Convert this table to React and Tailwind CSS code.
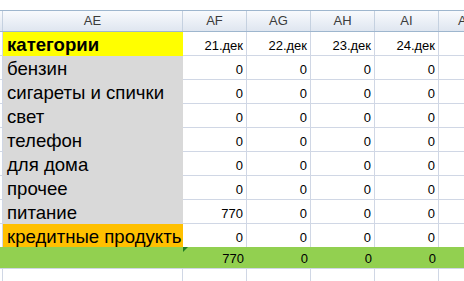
import React from 'react';

const cols = ['AF', 'AG', 'AH', 'AI'];

const rows = [
  { name: 'бензин', vals: ['0', '0', '0', '0'] },
  { name: 'сигареты и спички', vals: ['0', '0', '0', '0'] },
  { name: 'свет', vals: ['0', '0', '0', '0'] },
  { name: 'телефон', vals: ['0', '0', '0', '0'] },
  { name: 'для дома', vals: ['0', '0', '0', '0'] },
  { name: 'прочее', vals: ['0', '0', '0', '0'] },
  { name: 'питание', vals: ['770', '0', '0', '0'] },
];

function NumCell({ children }) {
  return (
    <div className="w-[64px] shrink-0 h-full flex items-end justify-end pr-[3px] pb-[3px] border-r border-[#d0d7e5] text-[13px] leading-none text-black">
      {children}
    </div>
  );
}

function App() {
  return (
    <div
      className="w-[464px] h-[281px] overflow-hidden bg-white flex flex-col"
      style={{ fontFamily: '"Liberation Sans", Arial, sans-serif' }}>
      <div className="h-[11px] shrink-0 border-b border-[#9eb6ce] bg-white" />

      {/* column headers */}
      <div className="h-[21px] shrink-0 flex pl-[2px] border-b border-[#9eb6ce] bg-gradient-to-b from-[#f8fafd] to-[#dfe6f0]">
        <div className="w-[181px] shrink-0 flex items-center justify-center border-l border-r border-[#c5d1e0] text-[13px] text-[#3b3b3b]">
          AE
        </div>
        {cols.map((c) => (
          <div
            key={c}
            className="w-[64px] shrink-0 flex items-center justify-center border-r border-[#c5d1e0] text-[13px] text-[#3b3b3b]">
            {c}
          </div>
        ))}
        <div className="flex-1 flex items-center pl-[19px] text-[13px] text-[#3b3b3b]">
          A
        </div>
      </div>

      {/* title row */}
      <div className="h-[24px] shrink-0 flex pl-[2px] border-b border-[#d0d7e5]">
        <div className="w-[181px] shrink-0 h-[24px] -mb-px flex items-end pl-[4px] pb-[1px] border-l border-[#d0d7e5] bg-[#ffff00] text-[18.6px] font-bold leading-none text-black whitespace-nowrap">
          категории
        </div>
        <NumCell>21.дек</NumCell>
        <NumCell>22.дек</NumCell>
        <NumCell>23.дек</NumCell>
        <NumCell>24.дек</NumCell>
        <div className="flex-1" />
      </div>

      {rows.map((r) => (
        <div key={r.name} className="h-[24px] shrink-0 flex pl-[2px] border-b border-[#d0d7e5]">
          <div className="w-[181px] shrink-0 h-[24px] -mb-px flex items-end pl-[4px] pb-[1px] border-l border-[#d0d7e5] bg-[#d9d9d9] text-[18.6px] leading-none text-black whitespace-nowrap">
            {r.name}
          </div>
          {r.vals.map((v, i) => (
            <NumCell key={i}>{v}</NumCell>
          ))}
          <div className="flex-1" />
        </div>
      ))}

      {/* credit row */}
      <div className="h-[24px] shrink-0 flex pl-[2px] border-b border-[#d0d7e5]">
        <div className="w-[181px] shrink-0 h-[24px] -mb-px flex items-end pl-[4px] pb-[1px] border-l border-[#d0d7e5] bg-[#ffc000] text-[18.6px] leading-none text-black whitespace-nowrap">
          кредитные продукть
        </div>
        <NumCell>0</NumCell>
        <NumCell>0</NumCell>
        <NumCell>0</NumCell>
        <NumCell>0</NumCell>
        <div className="flex-1" />
      </div>

      {/* totals row */}
      <div className="h-[21px] shrink-0 flex pl-[2px] bg-[#92d050] -mt-px">
        <div className="w-[181px] shrink-0 border-l border-[#92d050]" />
        <div className="relative w-[64px] shrink-0 flex items-end justify-end pr-[3px] pb-[3px] text-[13px] leading-none text-black">
          <span className="absolute left-0 top-0 w-0 h-0 border-t-[5px] border-r-[5px] border-t-[#1e7b22] border-r-transparent" />
          770
        </div>
        {['0', '0', '0'].map((v, i) => (
          <div
            key={i}
            className="w-[64px] shrink-0 flex items-end justify-end pr-[3px] pb-[3px] text-[13px] leading-none text-black">
            {v}
          </div>
        ))}
        <div className="flex-1" />
      </div>

      {/* empty row */}
      <div className="flex-1 flex pl-[2px] border-t border-[#d0d7e5]">
        <div className="w-[181px] shrink-0 border-l border-r border-[#d0d7e5]" />
        {cols.map((c) => (
          <div key={c} className="w-[64px] shrink-0 border-r border-[#d0d7e5]" />
        ))}
      </div>
    </div>
  );
}

export default App;
